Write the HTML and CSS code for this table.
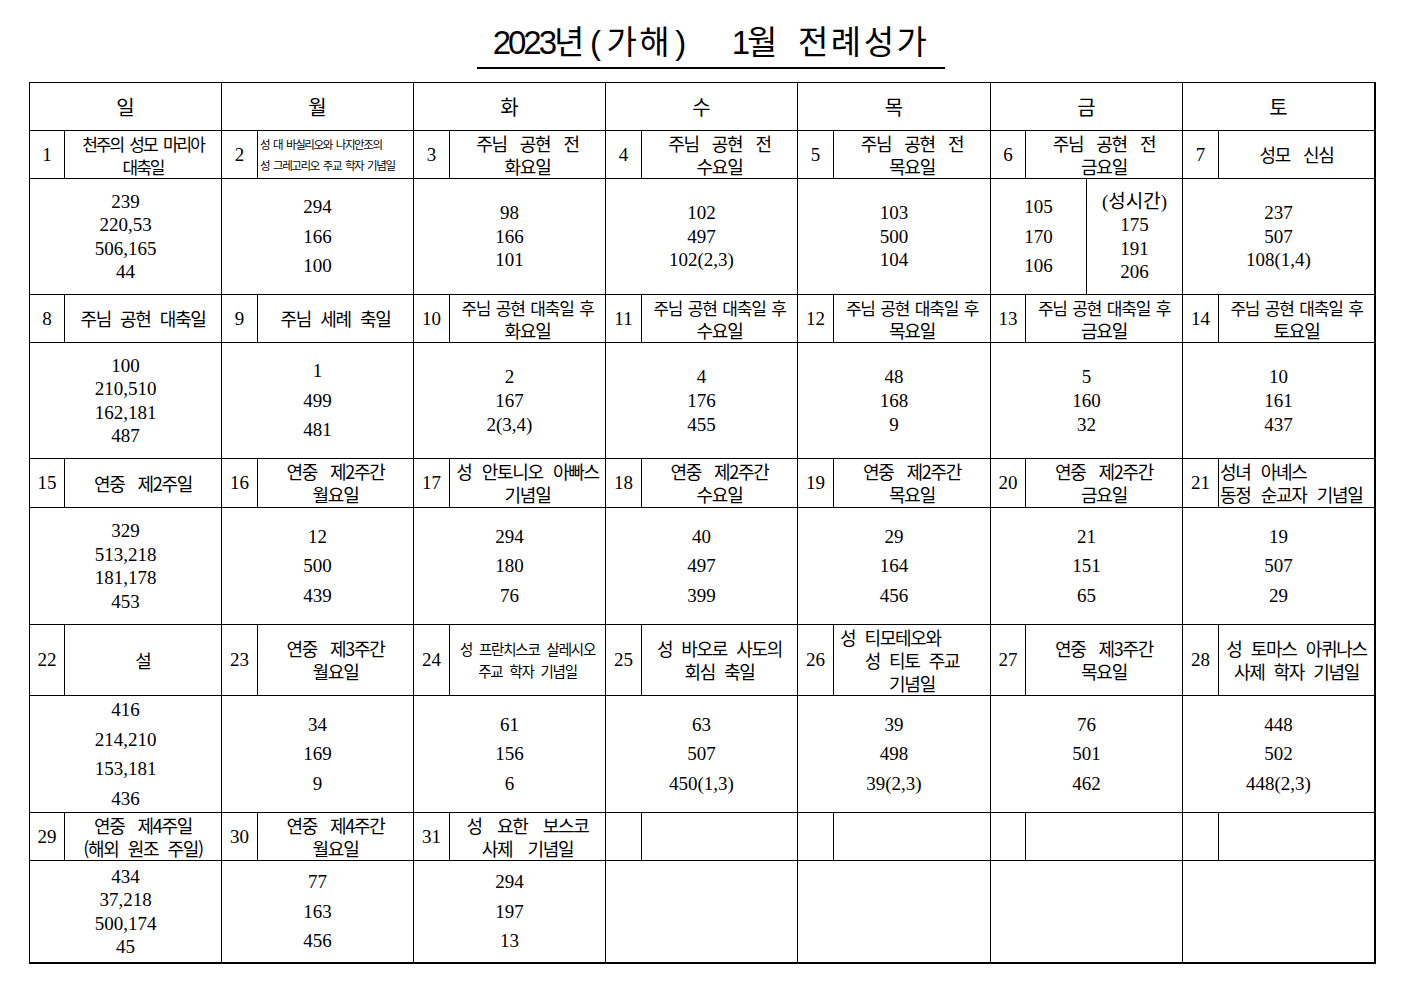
FILE: index.html
```html
<!DOCTYPE html>
<html lang="ko">
<head>
<meta charset="utf-8">
<title>2023년(가해) 1월 전례성가</title>
<link rel="stylesheet" href="styles.css">
</head>
<body>
<div class="page">
  <div class="title-wrap">
    <h1 class="title"><span class="dg">2023</span>년<span class="pr">(</span>가해<span class="pr">)</span><span class="t2"><span class="dg">1</span>월</span><span class="t3">전례성가</span></h1>
  </div>

  <div class="cal">
    <div class="wd">일</div>
    <div class="wd">월</div>
    <div class="wd">화</div>
    <div class="wd">수</div>
    <div class="wd">목</div>
    <div class="wd">금</div>
    <div class="wd">토</div>

    <!-- week 1 -->
    <div class="dn">1</div>
    <div class="lb"><span class="sq2">천주의 성모 마리아</span><span class="sq2">대축일</span></div>
    <div class="dn">2</div>
    <div class="lb tiny"><span>성 대 바실리오와 나지안조의</span><span>성 그레고리오 주교 학자 기념일</span></div>
    <div class="dn">3</div>
    <div class="lb"><span class="wide">주님 공현 전</span><span>화요일</span></div>
    <div class="dn">4</div>
    <div class="lb"><span class="wide">주님 공현 전</span><span>수요일</span></div>
    <div class="dn">5</div>
    <div class="lb"><span class="wide">주님 공현 전</span><span>목요일</span></div>
    <div class="dn">6</div>
    <div class="lb"><span class="wide">주님 공현 전</span><span>금요일</span></div>
    <div class="dn">7</div>
    <div class="lb"><span class="wide">성모 신심</span></div>

    <div class="ct lh23"><span>239</span><span>220,53</span><span>506,165</span><span>44</span></div>
    <div class="ct lh29"><span>294</span><span>166</span><span>100</span></div>
    <div class="ct lh23"><span>98</span><span>166</span><span>101</span></div>
    <div class="ct lh23"><span>102</span><span>497</span><span>102(2,3)</span></div>
    <div class="ct lh23"><span>103</span><span>500</span><span>104</span></div>
    <div class="ct split">
      <div class="half lh29"><span>105</span><span>170</span><span>106</span></div>
      <div class="half lh23"><span>(성시간)</span><span>175</span><span>191</span><span>206</span></div>
    </div>
    <div class="ct lh23"><span>237</span><span>507</span><span>108(1,4)</span></div>

    <!-- week 2 -->
    <div class="dn">8</div>
    <div class="lb"><span>주님 공현 대축일</span></div>
    <div class="dn">9</div>
    <div class="lb"><span>주님 세례 축일</span></div>
    <div class="dn">10</div>
    <div class="lb"><span class="sq">주님 공현 대축일 후</span><span>화요일</span></div>
    <div class="dn">11</div>
    <div class="lb"><span class="sq">주님 공현 대축일 후</span><span>수요일</span></div>
    <div class="dn">12</div>
    <div class="lb"><span class="sq">주님 공현 대축일 후</span><span>목요일</span></div>
    <div class="dn">13</div>
    <div class="lb"><span class="sq">주님 공현 대축일 후</span><span>금요일</span></div>
    <div class="dn">14</div>
    <div class="lb"><span class="sq">주님 공현 대축일 후</span><span>토요일</span></div>

    <div class="ct lh23"><span>100</span><span>210,510</span><span>162,181</span><span>487</span></div>
    <div class="ct lh29"><span>1</span><span>499</span><span>481</span></div>
    <div class="ct lh24"><span>2</span><span>167</span><span>2(3,4)</span></div>
    <div class="ct lh24"><span>4</span><span>176</span><span>455</span></div>
    <div class="ct lh24"><span>48</span><span>168</span><span>9</span></div>
    <div class="ct lh24"><span>5</span><span>160</span><span>32</span></div>
    <div class="ct lh24"><span>10</span><span>161</span><span>437</span></div>

    <!-- week 3 -->
    <div class="dn">15</div>
    <div class="lb"><span class="wide">연중 제2주일</span></div>
    <div class="dn">16</div>
    <div class="lb"><span class="wide">연중 제2주간</span><span>월요일</span></div>
    <div class="dn">17</div>
    <div class="lb"><span class="mid">성 안토니오 아빠스</span><span>기념일</span></div>
    <div class="dn">18</div>
    <div class="lb"><span class="wide">연중 제2주간</span><span>수요일</span></div>
    <div class="dn">19</div>
    <div class="lb"><span class="wide">연중 제2주간</span><span>목요일</span></div>
    <div class="dn">20</div>
    <div class="lb"><span class="wide">연중 제2주간</span><span>금요일</span></div>
    <div class="dn">21</div>
    <div class="lb left"><span class="mid">성녀 아녜스</span><span class="mid">동정 순교자 기념일</span></div>

    <div class="ct lh23"><span>329</span><span>513,218</span><span>181,178</span><span>453</span></div>
    <div class="ct lh29"><span>12</span><span>500</span><span>439</span></div>
    <div class="ct lh29"><span>294</span><span>180</span><span>76</span></div>
    <div class="ct lh29"><span>40</span><span>497</span><span>399</span></div>
    <div class="ct lh29"><span>29</span><span>164</span><span>456</span></div>
    <div class="ct lh29"><span>21</span><span>151</span><span>65</span></div>
    <div class="ct lh29"><span>19</span><span>507</span><span>29</span></div>

    <!-- week 4 -->
    <div class="dn">22</div>
    <div class="lb"><span>설</span></div>
    <div class="dn">23</div>
    <div class="lb"><span class="wide">연중 제3주간</span><span>월요일</span></div>
    <div class="dn">24</div>
    <div class="lb small"><span>성 프란치스코 살레시오</span><span>주교 학자 기념일</span></div>
    <div class="dn">25</div>
    <div class="lb"><span>성 바오로 사도의</span><span>회심 축일</span></div>
    <div class="dn">26</div>
    <div class="lb"><span class="first-left">성 티모테오와</span><span>성 티토 주교</span><span>기념일</span></div>
    <div class="dn">27</div>
    <div class="lb"><span class="wide">연중 제3주간</span><span>목요일</span></div>
    <div class="dn">28</div>
    <div class="lb"><span>성 토마스 아퀴나스</span><span>사제 학자 기념일</span></div>

    <div class="ct lh29"><span>416</span><span>214,210</span><span>153,181</span><span>436</span></div>
    <div class="ct lh29"><span>34</span><span>169</span><span>9</span></div>
    <div class="ct lh29"><span>61</span><span>156</span><span>6</span></div>
    <div class="ct lh29"><span>63</span><span>507</span><span>450(1,3)</span></div>
    <div class="ct lh29"><span>39</span><span>498</span><span>39(2,3)</span></div>
    <div class="ct lh29"><span>76</span><span>501</span><span>462</span></div>
    <div class="ct lh29"><span>448</span><span>502</span><span>448(2,3)</span></div>

    <!-- week 5 -->
    <div class="dn">29</div>
    <div class="lb"><span class="wide">연중 제4주일</span><span>(해외 원조 주일)</span></div>
    <div class="dn">30</div>
    <div class="lb"><span class="wide">연중 제4주간</span><span>월요일</span></div>
    <div class="dn">31</div>
    <div class="lb"><span class="wider">성 요한 보스코</span><span class="wider">사제 기념일</span></div>
    <div class="dn"></div>
    <div class="lb"></div>
    <div class="dn"></div>
    <div class="lb"></div>
    <div class="dn"></div>
    <div class="lb"></div>
    <div class="dn"></div>
    <div class="lb"></div>

    <div class="ct lh23"><span>434</span><span>37,218</span><span>500,174</span><span>45</span></div>
    <div class="ct lh29"><span>77</span><span>163</span><span>456</span></div>
    <div class="ct lh29"><span>294</span><span>197</span><span>13</span></div>
    <div class="ct"></div>
    <div class="ct"></div>
    <div class="ct"></div>
    <div class="ct"></div>
  </div>
</div>
</body>
</html>
```

FILE: styles.css
```css
* {
  box-sizing: border-box;
}

html,
body {
  margin: 0;
  background: #fff;
}

body {
  color: #000;
  font-family: "Liberation Serif", "Noto Sans CJK KR", serif;
}

.page {
  padding-top: 23px;
  width: 1403px;
}

/* ---------- title ---------- */
.title-wrap {
  display: flex;
  justify-content: center;
  padding-left: 19px;
}

.title {
  margin: 0 0 13px 0;
  padding: 0 16px 4px;
  border-bottom: 2px solid #000;
  font-family: "Liberation Sans", "Noto Sans CJK KR", sans-serif;
  font-weight: 400;
  font-size: 33px;
  line-height: 40px;
  letter-spacing: 2.5px;
  white-space: nowrap;
}

.title .dg {
  letter-spacing: -3px;
}

.title .pr {
  margin: 0 3px;
}

.title .t2 {
  margin-left: 40px;
}

.title .t3 {
  margin-left: 18px;
}

/* ---------- calendar grid ---------- */
.cal {
  margin-left: 29px;
  width: max-content;
  display: grid;
  grid-template-columns:
    34px 156px 35px 155px 35px 155px 35px 155px
    35px 156px 34px 156px 35px 155px;
  grid-template-rows:
    47px 47px 115px 47px 115px 48px 116px 70px 116px 47px 101px;
  gap: 1px;
  background: #000;
  padding: 1px 2px 2px 1px;
}

.cal > div {
  background: #fff;
}

.wd {
  grid-column: span 2;
  display: flex;
  align-items: center;
  justify-content: center;
  font-family: "Noto Sans CJK KR", sans-serif;
  font-size: 20px;
}

.dn {
  display: flex;
  align-items: center;
  justify-content: center;
  font-size: 19px;
}

.lb {
  display: flex;
  flex-direction: column;
  justify-content: center;
  align-items: center;
  text-align: center;
  font-family: "Noto Sans CJK KR", sans-serif;
  font-size: 18px;
  line-height: 23px;
  letter-spacing: -1.3px;
  word-spacing: 5.4px;
  white-space: nowrap;
  overflow: hidden;
}

.lb .wide {
  word-spacing: 9.4px;
}

.lb .mid {
  word-spacing: 6.5px;
}

.lb .wider {
  word-spacing: 11.4px;
}

.lb .sq {
  font-size: 17px;
  letter-spacing: -1.2px;
  word-spacing: 2px;
}

.lb .sq2 {
  font-size: 17px;
  letter-spacing: -2px;
  word-spacing: 3.5px;
}

.lb.tiny {
  align-items: flex-start;
  padding-left: 2px;
  font-size: 11.5px;
  line-height: 21px;
  letter-spacing: -1.4px;
  word-spacing: 2px;
}

.lb.small {
  font-size: 14.5px;
  line-height: 22px;
  letter-spacing: -1.2px;
  word-spacing: 4px;
}

.lb.left {
  align-items: flex-start;
  padding-left: 1px;
}

.lb .first-left {
  align-self: flex-start;
  padding-left: 6px;
}

.ct {
  grid-column: span 2;
  display: flex;
  flex-direction: column;
  justify-content: center;
  align-items: center;
  font-size: 19px;
  white-space: nowrap;
}

.ct.split {
  display: grid;
  grid-template-columns: 95px 95px;
  align-items: stretch;
  justify-content: stretch;
  gap: 1px;
  background: #000;
}

.half {
  background: #fff;
  display: flex;
  flex-direction: column;
  justify-content: center;
  align-items: center;
}

.lh23 {
  line-height: 23.5px;
}

.lh24 {
  line-height: 24px;
}

.lh29 {
  line-height: 29.5px;
}
```
